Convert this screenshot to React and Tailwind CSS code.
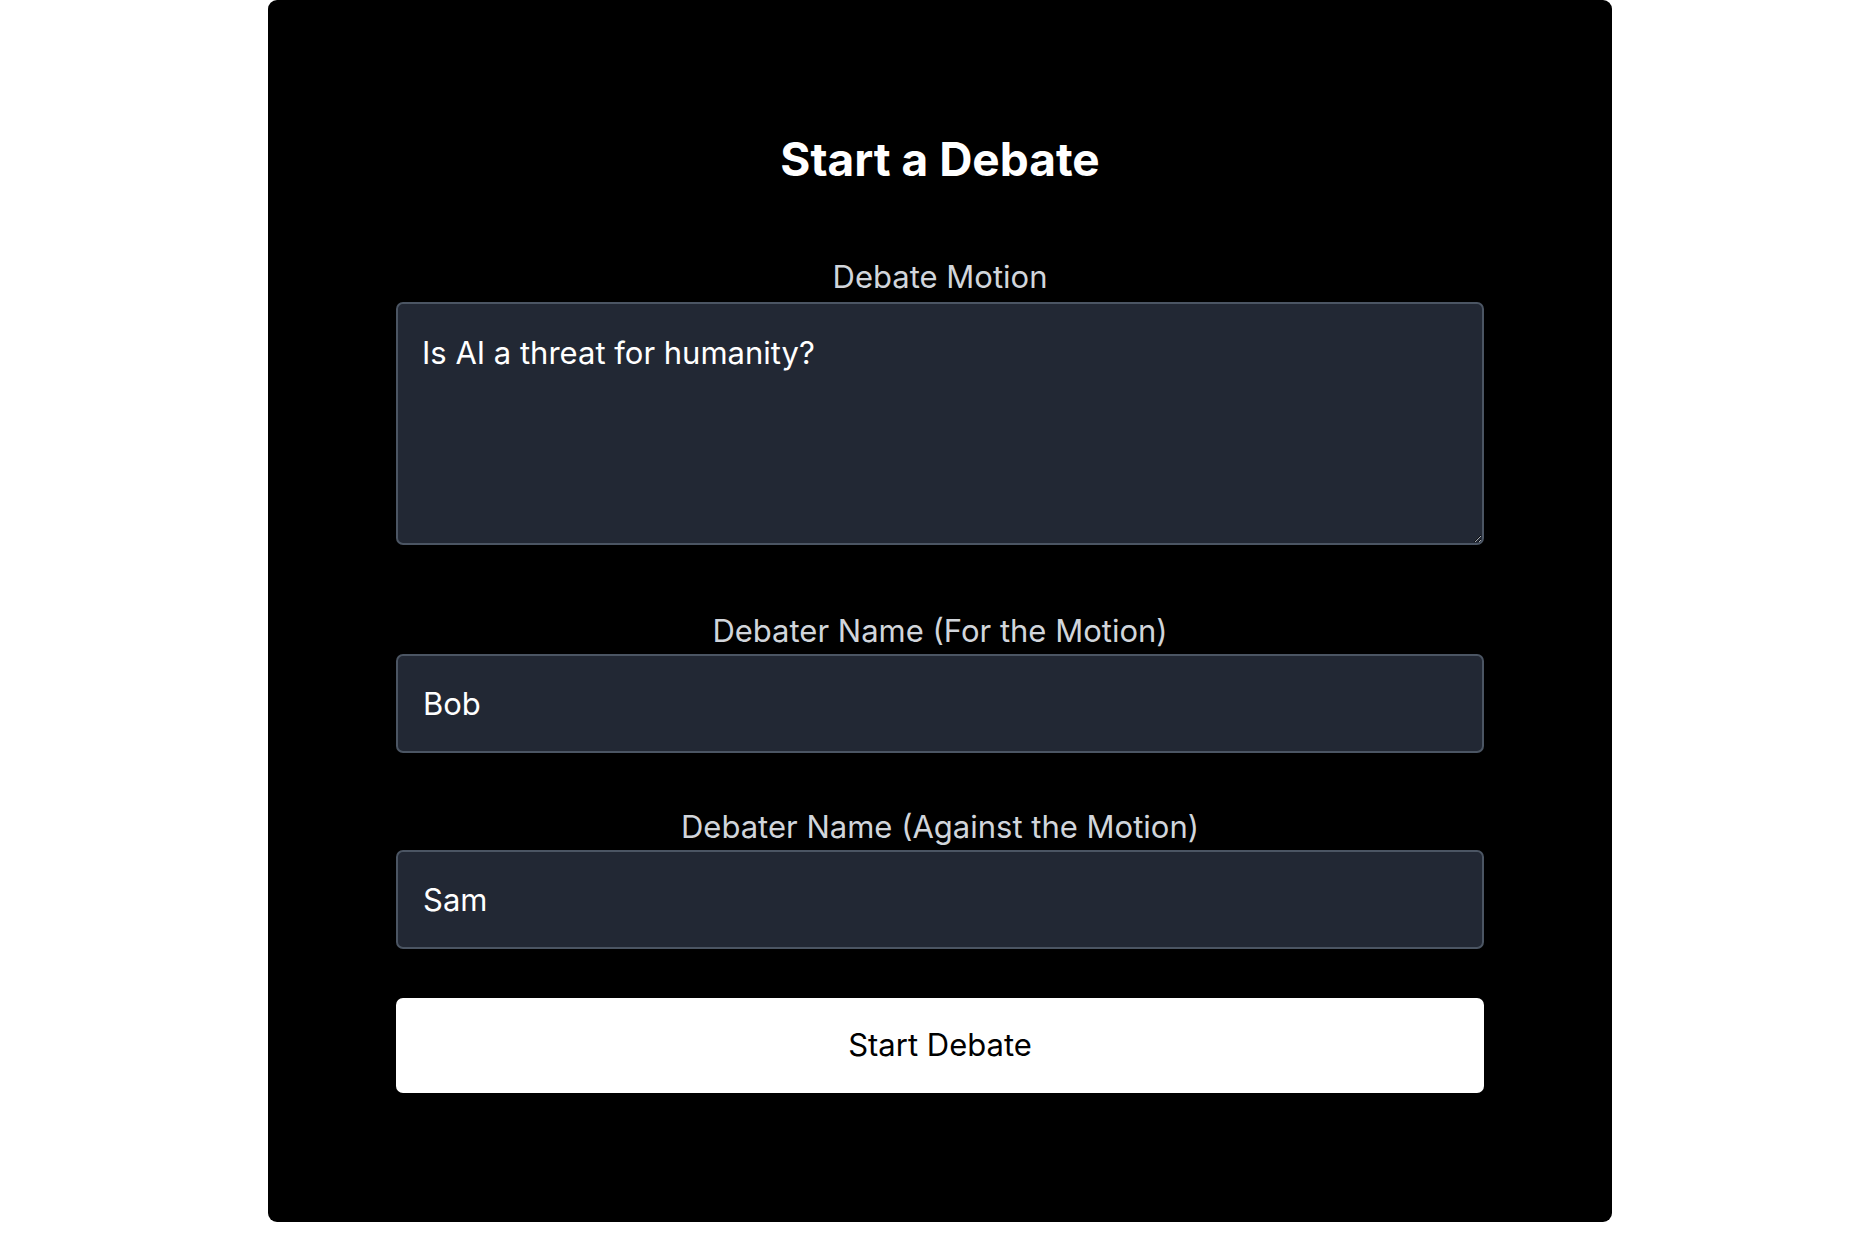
import { useState } from "react";

export default function App() {
  const [motion, setMotion] = useState("Is AI a threat for humanity?");
  const [forName, setForName] = useState("Bob");
  const [againstName, setAgainstName] = useState("Sam");

  return (
    <div className="min-h-[1250px] bg-white font-['Inter','Liberation_Sans',sans-serif]">
      <div className="ml-[268px] w-[1344px] rounded-[9px] bg-black px-[128px] pb-[129px] pt-[132px]">
        {/* Title */}
        <h1 className="text-center text-[46px] font-bold leading-[54px] text-white">
          Start a Debate
        </h1>

        {/* Motion */}
        <div className="mt-[73px] flex flex-col">
          <label className="mb-[7px] text-center text-[31px] leading-[36px] text-[#d1d5db]">
            Debate Motion
          </label>
          <textarea
            value={motion}
            onChange={(e) => setMotion(e.target.value)}
            className="block h-[243px] w-full rounded-[7px] border-2 border-[#4b5563] bg-[#222834] px-[24px] pb-[24px] pt-[26px] text-[31px] leading-[45px] text-white outline-none [color-scheme:dark]"
          />
        </div>

        {/* For the motion */}
        <div className="mt-[68px] flex flex-col">
          <label className="mb-[5px] text-center text-[31px] leading-[36px] text-[#d1d5db]">
            Debater Name (For the Motion)
          </label>
          <input
            value={forName}
            onChange={(e) => setForName(e.target.value)}
            className="h-[99px] w-full rounded-[7px] border-2 border-[#4b5563] bg-[#222834] px-[25px] text-[31px] text-white outline-none"
          />
        </div>

        {/* Against the motion */}
        <div className="mt-[56px] flex flex-col">
          <label className="mb-[5px] text-center text-[31px] leading-[36px] text-[#d1d5db]">
            Debater Name (Against the Motion)
          </label>
          <input
            value={againstName}
            onChange={(e) => setAgainstName(e.target.value)}
            className="h-[99px] w-full rounded-[7px] border-2 border-[#4b5563] bg-[#222834] px-[25px] text-[31px] text-white outline-none"
          />
        </div>

        <button className="mt-[49px] h-[95px] w-full rounded-[7px] bg-white text-[31px] text-black">
          Start Debate
        </button>
      </div>
    </div>
  );
}
